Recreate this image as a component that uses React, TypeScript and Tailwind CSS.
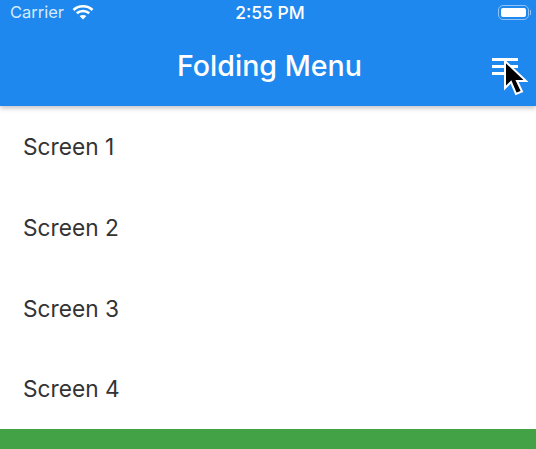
const screens = ["Screen 1", "Screen 2", "Screen 3", "Screen 4"];

function WifiIcon() {
  return (
    <svg width="22" height="16" viewBox="0 0 22 16" fill="none" stroke="white" strokeWidth="2.6">
      <path d="M1.5 6 C6.5 1 15.5 1 20.5 6" />
      <path d="M4.8 9.2 C8 6.2 14 6.2 17.2 9.2" />
      <path d="M11 15.5 L7.6 12 C9.5 10.6 12.5 10.6 14.4 12 Z" fill="white" stroke="none" />
    </svg>
  );
}

function Battery() {
  return (
    <div className="flex items-center">
      <div className="flex h-[15px] w-[31px] rounded-[5px] border border-[#8fc3f7] p-[2px]">
        <div className="flex-1 rounded-[2px] bg-white" />
      </div>
      <div className="ml-px h-[5px] w-px bg-[#8fc3f7]" />
    </div>
  );
}

function Cursor() {
  return (
    <svg className="absolute left-[503px] top-[60px] z-20" width="25" height="37" viewBox="0 0 25 37">
      <path
        d="M2 1 V28 L8 22 L13 34 L19 31.5 L14 21 H23 Z"
        fill="black"
        stroke="white"
        strokeWidth="2"
      />
    </svg>
  );
}

export default function App() {
  return (
    <div className="relative flex h-[449px] w-[536px] flex-col overflow-hidden bg-white font-['Inter',sans-serif]">
      <header className="relative z-10 h-[106px] shrink-0 bg-[#1e88ee] text-white shadow-[0_2px_5px_rgba(0,0,0,0.25)]">
        <div className="flex h-[24px] items-center justify-between pl-[10px] pr-[5px]">
          <div className="flex items-center gap-[8px]">
            <span className="text-[16.5px] text-[#d6eafd]">Carrier</span>
            <WifiIcon />
          </div>
          <Battery />
        </div>
        <span className="absolute left-0 right-0 top-0 pl-[4px] text-center text-[17.5px] font-medium">2:55 PM</span>
        <div className="relative flex h-[82px] items-center justify-center pl-[3px] pt-[2px]">
          <h1 className="text-[28.6px] font-medium">Folding Menu</h1>
          <div className="absolute left-[492px] top-[34px] flex w-[26px] flex-col gap-[4px]">
            <div className="h-[3px] bg-white" />
            <div className="h-[3px] bg-white" />
            <div className="h-[3px] bg-white" />
          </div>
        </div>
      </header>
      <main className="min-h-0 flex-1 px-[23px] pt-px text-[22.7px] text-[#333333]">
        {screens.map((s) => (
          <div key={s} className="flex h-[80.7px] items-center">
            {s}
          </div>
        ))}
      </main>
      <div className="relative h-[20px] shrink-0 bg-[#43a246]" />
      <Cursor />
    </div>
  );
}
